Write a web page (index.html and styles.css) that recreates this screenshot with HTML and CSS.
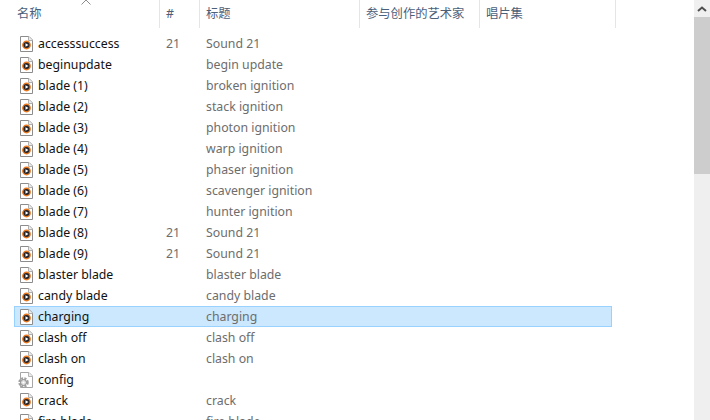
FILE: index.html
```html
<!DOCTYPE html>
<html lang="zh-CN">
<head>
    <meta charset="UTF-8">
    <title>sounds</title>
    <link rel="stylesheet" href="styles.css">
</head>
<body>
    <svg class="defs" width="0" height="0">
        <symbol id="audio" viewBox="0 0 13 16">
            <path d="M.5 .5H9L12.500 4V15.500H.5Z" fill="#fff" stroke="#8c8c8c"/>
            <path d="M8.500 .5V4.500H12.500" fill="#ececec" stroke="#b0b0b0"/>
            <circle cx="6.500" cy="9" r="4.400" fill="#e8761c"/>
            <path d="M6.500 4.600a4.400 4.400 0 0 1 0 8.800a3 3 0 0 0 0-8.800Z" fill="#7d3aa8"/>
            <circle cx="6.500" cy="9" r="3" fill="#23232b"/>
            <path d="M5.500 7.300 8.500 9 5.500 10.700Z" fill="#fff"/>
        </symbol>
        <symbol id="settings" viewBox="0 0 15 16">
            <path d="M2.500 .5H11L14.500 4V15.500H2.500Z" fill="#fff" stroke="#a6a6a6"/>
            <path d="M10.500 .5V4.500H14.500" fill="#ececec" stroke="#b5b5b5"/>
            <circle cx="5.500" cy="10.500" r="4" fill="none" stroke="#a0a0a0" stroke-width="2.500" stroke-dasharray="2 1.200"/>
            <circle cx="5.500" cy="10.500" r="3" fill="#dcdcdc" stroke="#909090"/>
            <circle cx="5.500" cy="10.500" r="1.100" fill="#fff"/>
        </symbol>
    </svg>

    <div class="window">
        <div class="pane">
            <div class="header">
                <div class="col-head name-head">名称
                    <svg class="sort" width="10" height="5" viewBox="0 0 10 5"><path d="M.5 4.500 5 0 9.500 4.500" fill="none" stroke="#8c8c8c"/></svg>
                </div>
                <div class="col-head">#</div>
                <div class="col-head">标题</div>
                <div class="col-head">参与创作的艺术家</div>
                <div class="col-head">唱片集</div>
            </div>
            <div class="rows">
                <div class="row"><svg class="icon"><use href="#audio"/></svg><span class="name">accesssuccess</span><span class="cell">21</span><span class="cell">Sound 21</span></div>
                <div class="row"><svg class="icon"><use href="#audio"/></svg><span class="name">beginupdate</span><span class="cell"></span><span class="cell">begin update</span></div>
                <div class="row"><svg class="icon"><use href="#audio"/></svg><span class="name">blade (1)</span><span class="cell"></span><span class="cell">broken ignition</span></div>
                <div class="row"><svg class="icon"><use href="#audio"/></svg><span class="name">blade (2)</span><span class="cell"></span><span class="cell">stack ignition</span></div>
                <div class="row"><svg class="icon"><use href="#audio"/></svg><span class="name">blade (3)</span><span class="cell"></span><span class="cell">photon ignition</span></div>
                <div class="row"><svg class="icon"><use href="#audio"/></svg><span class="name">blade (4)</span><span class="cell"></span><span class="cell">warp ignition</span></div>
                <div class="row"><svg class="icon"><use href="#audio"/></svg><span class="name">blade (5)</span><span class="cell"></span><span class="cell">phaser ignition</span></div>
                <div class="row"><svg class="icon"><use href="#audio"/></svg><span class="name">blade (6)</span><span class="cell"></span><span class="cell">scavenger ignition</span></div>
                <div class="row"><svg class="icon"><use href="#audio"/></svg><span class="name">blade (7)</span><span class="cell"></span><span class="cell">hunter ignition</span></div>
                <div class="row"><svg class="icon"><use href="#audio"/></svg><span class="name">blade (8)</span><span class="cell">21</span><span class="cell">Sound 21</span></div>
                <div class="row"><svg class="icon"><use href="#audio"/></svg><span class="name">blade (9)</span><span class="cell">21</span><span class="cell">Sound 21</span></div>
                <div class="row"><svg class="icon"><use href="#audio"/></svg><span class="name">blaster blade</span><span class="cell"></span><span class="cell">blaster blade</span></div>
                <div class="row"><svg class="icon"><use href="#audio"/></svg><span class="name">candy blade</span><span class="cell"></span><span class="cell">candy blade</span></div>
                <div class="row selected"><svg class="icon"><use href="#audio"/></svg><span class="name">charging</span><span class="cell"></span><span class="cell">charging</span></div>
                <div class="row"><svg class="icon"><use href="#audio"/></svg><span class="name">clash off</span><span class="cell"></span><span class="cell">clash off</span></div>
                <div class="row"><svg class="icon"><use href="#audio"/></svg><span class="name">clash on</span><span class="cell"></span><span class="cell">clash on</span></div>
                <div class="row"><svg class="icon wide"><use href="#settings"/></svg><span class="name">config</span><span class="cell"></span><span class="cell"></span></div>
                <div class="row"><svg class="icon"><use href="#audio"/></svg><span class="name">crack</span><span class="cell"></span><span class="cell">crack</span></div>
                <div class="row"><svg class="icon"><use href="#audio"/></svg><span class="name">fire blade</span><span class="cell"></span><span class="cell">fire blade</span></div>
            </div>
        </div>
        <div class="scrollbar">
            <div class="scroll-up">
                <svg width="10" height="6" viewBox="0 0 10 6"><path d="M1 5 5 1.500 9 5" fill="none" stroke="#505050" stroke-width="2"/></svg>
            </div>
            <div class="scroll-thumb"></div>
        </div>
    </div>
</body>
</html>
```

FILE: styles.css
```css
* {
    margin: 0;
    padding: 0;
    box-sizing: border-box;
}

html, body {
    height: 420px;
    overflow: hidden;
    background-color: #fff;
}

body {
    font-family: "Noto Sans", "Noto Sans CJK SC", sans-serif;
    font-size: 12.3px;
}

.defs {
    display: block;
    height: 0;
}

.window {
    display: flex;
    height: 420px;
}

.pane {
    width: 694px;
    flex: none;
}

.header {
    display: grid;
    grid-template-columns: 160px 40px 160px 120px 136px;
    height: 26px;
}

.col-head {
    position: relative;
    padding-left: 6px;
    border-right: 1px solid #e5e5e5;
    color: #4c607a;
    line-height: 28px;
}

.name-head {
    padding-left: 17px;
}

.sort {
    position: absolute;
    left: 81px;
    top: 0;
}

.rows {
    padding: 7px 0 0 14px;
}

.row {
    display: grid;
    grid-template-columns: 5px 18px 128px 40px 1fr;
    width: 598px;
    height: 21px;
    line-height: 19px;
    border: 1px solid transparent;
    align-items: center;
    white-space: nowrap;
}

.row .icon {
    grid-column: 2;
    width: 13px;
    height: 16px;
}

.row .icon.wide {
    width: 15px;
    margin-left: -2px;
}

.row.selected {
    background-color: #cbe8ff;
    border-color: #99d1ff;
}

.name {
    color: #111;
}

.cell {
    color: #6d6d6d;
}

.scrollbar {
    width: 16px;
    flex: none;
    background-color: #efefef;
}

.scroll-up {
    height: 17px;
    display: flex;
    align-items: center;
    justify-content: center;
    background-color: #f0f0f0;
}

.scroll-thumb {
    height: 157px;
    background-color: #cdcdcd;
}
```
